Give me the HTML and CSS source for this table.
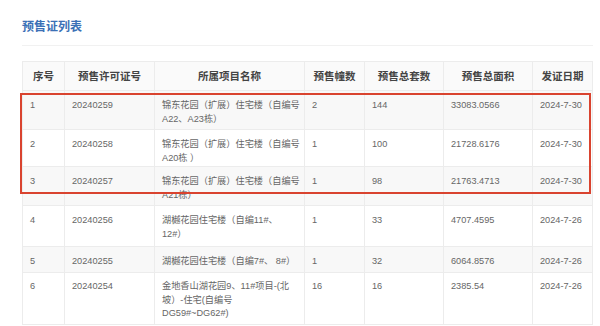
FILE: index.html
```html
<!DOCTYPE html>
<html lang="zh-CN">
<head>
<meta charset="utf-8">
<link rel="stylesheet" href="styles.css">
</head>
<body>
<div class="page">
  <div class="head">
    <h1 class="title">预售证列表</h1>
  </div>
  <div class="table-wrap">
    <table class="list">
      <colgroup>
        <col class="c1"><col class="c2"><col class="c3"><col class="c4"><col class="c5"><col class="c6"><col class="c7">
      </colgroup>
      <thead>
        <tr><th>序号</th><th>预售许可证号</th><th>所属项目名称</th><th>预售幢数</th><th>预售总套数</th><th>预售总面积</th><th>发证日期</th></tr>
      </thead>
      <tbody>
        <tr class="r1"><td>1</td><td>20240259</td><td>锦东花园（扩展）住宅楼（自编号<br>A22、A23栋）</td><td>2</td><td>144</td><td>33083.0566</td><td>2024-7-30</td></tr>
        <tr class="r2"><td>2</td><td>20240258</td><td>锦东花园（扩展）住宅楼（自编号<br>A20栋 ）</td><td>1</td><td>100</td><td>21728.6176</td><td>2024-7-30</td></tr>
        <tr class="r3"><td>3</td><td>20240257</td><td>锦东花园（扩展）住宅楼（自编号<br>A21栋）</td><td>1</td><td>98</td><td>21763.4713</td><td>2024-7-30</td></tr>
        <tr class="r4"><td>4</td><td>20240256</td><td>湖樾花园住宅楼（自编11#、<br>12#）</td><td>1</td><td>33</td><td>4707.4595</td><td>2024-7-26</td></tr>
        <tr class="r5"><td>5</td><td>20240255</td><td>湖樾花园住宅楼（自编7#、 8#）</td><td>1</td><td>32</td><td>6064.8576</td><td>2024-7-26</td></tr>
        <tr class="r6"><td>6</td><td>20240254</td><td>金地香山湖花园9、11#项目-(北<br>坡）-住宅(自编号<br>DG59#~DG62#)</td><td>16</td><td>16</td><td>2385.54</td><td>2024-7-26</td></tr>
      </tbody>
    </table>
    <div class="mark"></div>
  </div>
</div>
</body>
</html>
```
FILE: styles.css
```css
html, body {
  margin: 0;
  padding: 0;
  background: #ffffff;
}
.page {
  padding: 0 8px 0 22px;
  font-family: "Liberation Sans", "Noto Sans CJK SC", sans-serif;
}
.head {
  padding-top: 18px;
  padding-bottom: 11px;
  border-bottom: 1px solid #f1f1f1;
  margin-right: -1px;
}
.title {
  margin: 0;
  font-size: 12px;
  line-height: 16px;
  font-weight: bold;
  color: #3b70b6;
  font-family: "Noto Sans CJK SC", sans-serif;
}
.table-wrap {
  position: relative;
  margin-top: 15px;
}
.list {
  width: 570px;
  border-collapse: collapse;
  table-layout: fixed;
}
.c1 { width: 42px; }
.c2 { width: 90px; }
.c3 { width: 150px; }
.c4 { width: 60px; }
.c5 { width: 79px; }
.c6 { width: 89px; }
.c7 { width: 60px; }
.list th {
  height: 28px;
  padding: 0;
  font-size: 10.5px;
  line-height: 14px;
  font-weight: bold;
  color: #444;
  background: #fafafa;
  border: 1px solid #ececec;
  text-align: center;
  font-family: "Noto Sans CJK SC", sans-serif;
}
.list td {
  padding: 7px 2px 3px 7px;
  font-size: 9.2px;
  line-height: 14px;
  color: #666;
  border: 1px solid #ececec;
  vertical-align: top;
  text-align: left;
  white-space: nowrap;
  overflow: hidden;
}
.list tbody tr:nth-child(odd) td {
  background: #f8f8f8;
}
.r2 td { padding-bottom: 1px; }
.r4 td { padding-bottom: 5px; }
.r5 td { padding-bottom: 4px; }
.r6 td { line-height: 13.5px; padding-bottom: 3px; }
.mark {
  position: absolute;
  left: -2px;
  top: 32px;
  width: 571px;
  height: 101px;
  box-sizing: border-box;
  border: 2px solid #d9432f;
  pointer-events: none;
}
```
